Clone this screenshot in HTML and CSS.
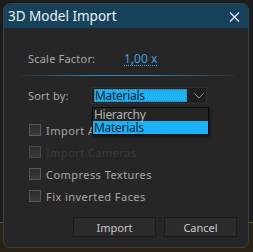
FILE: index.html
```html
<!DOCTYPE html>
<html>
	<head>
		<title>3D Model Import</title>
		<link rel="stylesheet" href="styles.css">
	</head>
	<body>
		<!-- Dialog window -->
		<div class="dialog">
			<div class="titlebar">
				<span class="title">3D Model Import</span>
				<svg class="close" width="11" height="10" viewBox="0 0 11 10">
					<path d="M1 0.5 L10 9.5 M10 0.5 L1 9.5" stroke="#e6eef2" stroke-width="1.2" fill="none"/>
				</svg>
			</div>
			<div class="content">
				<div class="row scale-row">
					<span class="label label-wide">Scale Factor:</span>
					<span class="value">1,00 x</span>
				</div>
				<div class="separator"></div>
				<div class="row sort-row">
					<span class="label">Sort by:</span>
					<div class="select">
						<span class="selected">Materials</span>
						<svg class="chevron" width="10" height="6" viewBox="0 0 10 6">
							<path d="M0.5 0.5 L5 5 L9.5 0.5" stroke="#9a9a9a" stroke-width="1" fill="none"/>
						</svg>
						<!-- open list -->
						<ul class="options">
							<li>Hierarchy</li>
							<li class="active">Materials</li>
						</ul>
					</div>
				</div>
				<div class="checks">
					<div class="check"><span class="box"></span>Import Animations</div>
					<div class="check disabled"><span class="box"></span>Import Cameras</div>
					<div class="check"><span class="box"></span>Compress Textures</div>
					<div class="check"><span class="box"></span>Fix inverted Faces</div>
				</div>
				<div class="buttons">
					<button type="button" class="btn btn-import">Import</button>
					<button type="button" class="btn btn-cancel">Cancel</button>
				</div>
			</div>
		</div>
	</body>
</html>
```

FILE: styles.css
```css
body {
	margin: 0;
	width: 253px;
	height: 252px;
	padding: 3px 4px 4px 3px;
	box-sizing: border-box;
	background: linear-gradient(#1c1c1c 0, #1c1c1c 222px, #6b5a22 222px, #6b5a22 223px, #2a2313 223px);
	font-family: "Noto Sans", "Open Sans", sans-serif;
	font-size: 11px;
	color: #a9a9a9;
}
.dialog {
	height: 245px;
	background-color: #262626;
	border: 1px solid #34424c;
	border-radius: 7px;
	overflow: hidden;
	display: flex;
	flex-direction: column;
	box-sizing: border-box;
}
.titlebar {
	height: 24px;
	background-color: #17425c;
	display: flex;
	align-items: center;
	justify-content: space-between;
	padding: 0 8px 0 4px;
}
.title {
	font-size: 13.5px;
	color: #eef2f4;
}
.close {
	display: block;
	margin-top: 1px;
}
.content {
	padding: 0 11px 0 24px;
	display: flex;
	flex-direction: column;
}
.row {
	display: flex;
	align-items: center;
	white-space: nowrap;
}
.label {
	width: 63px;
	flex-shrink: 0;
	letter-spacing: 0.2px;
}
.label-wide {
	width: 96px;
}
.scale-row {
	height: 16px;
	margin-top: 22px;
}
.value {
	color: #3f9fdc;
	border-bottom: 1px dotted #3f9fdc;
	line-height: 12px;
	margin-top: 2px;
	font-size: 12px;
}
.separator {
	height: 1px;
	margin: 9px 2px 0 -8px;
	background: linear-gradient(90deg, rgba(40,120,170,0.1), #2f86bb 35%, #2f86bb 60%, rgba(40,120,170,0.1));
}
.sort-row {
	margin-top: 11px;
	height: 17px;
	position: relative;
}
.select {
	position: relative;
	width: 116px;
	height: 17px;
	box-sizing: border-box;
	background-color: #1f1f1f;
	border: 1px solid #2f2f2f;
	display: flex;
	align-items: center;
	padding: 0 2px;
}
.selected {
	width: 94px;
	height: 13px;
	box-sizing: border-box;
	background-color: #19b2f2;
	outline: 1px dotted #5a6a70;
	outline-offset: -1px;
	color: #0e2230;
	font-size: 12px;
	line-height: 13px;
	padding-left: 1px;
	letter-spacing: -0.3px;
}
.chevron {
	margin-left: 7px;
}
.options {
	position: absolute;
	left: 0;
	top: 19px;
	width: 117px;
	margin: 0;
	padding: 0;
	list-style: none;
	border: 1px solid #080808;
	background-color: #232323;
	box-sizing: border-box;
	box-shadow: 1px 2px 3px rgba(0,0,0,0.5);
	z-index: 2;
}
.options li {
	height: 13px;
	line-height: 13px;
	font-size: 12px;
	padding-left: 1px;
	color: #b4b4b4;
	letter-spacing: -0.3px;
}
.options li.active {
	background-color: #19b4f8;
	color: #0e2230;
}
.checks {
	margin-top: 20px;
	display: flex;
	flex-direction: column;
	gap: 10px;
}
.check {
	display: flex;
	align-items: center;
	height: 12px;
	margin-left: 1px;
	letter-spacing: 0.45px;
	white-space: nowrap;
}
.check .box {
	width: 12px;
	height: 12px;
	box-sizing: border-box;
	border: 1px solid #585858;
	background: linear-gradient(#2c2c2c, #3a3a3a);
	margin-right: 5px;
	flex-shrink: 0;
}
.check.disabled {
	color: #3b3b3b;
}
.check.disabled .box {
	border-color: #4a4a4a;
}
.buttons {
	margin-top: 15px;
	display: flex;
	justify-content: flex-end;
	gap: 8px;
}
.btn {
	height: 20px;
	background-color: #2b2b2b;
	border: 1px solid #1a1a1a;
	color: #c9c9c9;
	font-family: "Noto Sans", "Open Sans", sans-serif;
	font-size: 11px;
	padding: 0;
}
.btn-import {
	width: 83px;
}
.btn-cancel {
	width: 73px;
}
```
